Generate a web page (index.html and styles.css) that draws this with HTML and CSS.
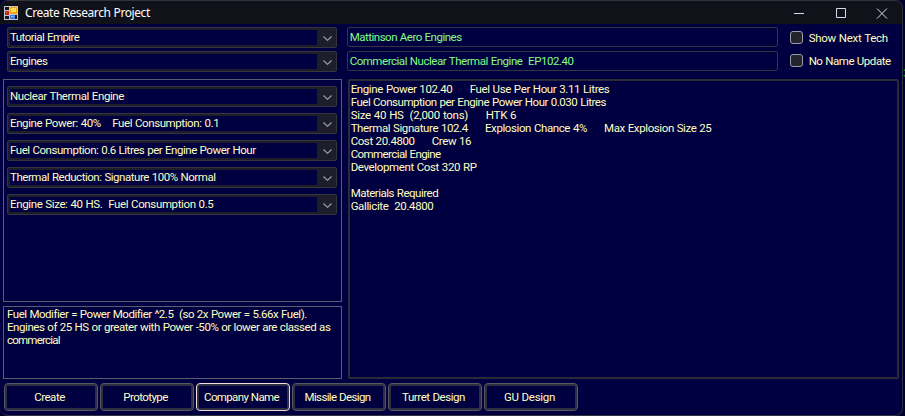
FILE: index.html
```html
<!DOCTYPE html>
<html lang="en">
<head>
<meta charset="utf-8">
<title>Create Research Project</title>
<link rel="stylesheet" href="styles.css">
</head>
<body>
<svg class="defs" width="0" height="0"><symbol id="chev" viewBox="0 0 9 5"><path d="M.5 .5 4.5 4.3 8.5 .5" fill="none" stroke="#a5a5ad" stroke-width="1.1"/></symbol></svg>
<div class="window">
  <header class="titlebar">
    <svg class="appicon" width="14" height="14" viewBox="0 0 14 14" shape-rendering="crispEdges">
      <path fill="#c4c6ca" d="M0 0h14v14H0z"/><path fill="#17181e" d="M1 1h4v3H1zM1 10h4v3H1zM6 1h7v12H6z"/>
      <path fill="#c8201c" d="M1 5h4v4H1z"/><path fill="#ef8a78" d="M2 6h1v1H2z"/>
      <path fill="#e8a70e" d="M6 1h7v7H6z"/><path fill="#ffd75a" d="M7 2h5v4H7z"/>
      <path fill="#c4c6ca" d="M6 8h7v1H6z"/><path fill="#3f7de0" d="M6 9h5v4H6z"/><path fill="#8fb8f5" d="M7 10h3v1H7z"/>
    </svg>
    <h1>Create Research Project</h1>
    <svg class="controls" width="94" height="12" viewBox="0 0 94 12" fill="none" stroke="#d5daf0">
      <path d="M0 6.5h10M42.5 1.5h9v9h-9zM83 1.5l10 10M93 1.5l-10 10"/>
    </svg>
  </header>
  <main>
    <section class="left">
      <div class="combo top"><span class="t55">Tutorial Empire</span><svg><use href="#chev"/></svg></div>
      <div class="combo top"><span class="t43">Engines</span><svg><use href="#chev"/></svg></div>
      <div class="group">
        <div class="combo"><span class="t40">Nuclear Thermal Engine</span><svg><use href="#chev"/></svg></div>
        <div class="combo"><span class="t40">Engine Power: 40%    Fuel Consumption: 0.1</span><svg><use href="#chev"/></svg></div>
        <div class="combo"><span class="t46">Fuel Consumption: 0.6 Litres per Engine Power Hour</span><svg><use href="#chev"/></svg></div>
        <div class="combo"><span class="t46">Thermal Reduction: Signature 100% Normal</span><svg><use href="#chev"/></svg></div>
        <div class="combo"><span class="t38">Engine Size: 40 HS.  Fuel Consumption 0.5</span><svg><use href="#chev"/></svg></div>
      </div>
      <div class="notes"><div class="t46">Fuel Modifier = Power Modifier ^2.5  (so 2x Power = 5.66x Fuel).</div><div class="t43">Engines of 25 HS or greater with Power -50% or lower are classed as</div><div class="t75">commercial</div></div>
    </section>
    <section class="right">
      <div class="head">
        <div class="fields">
          <div class="field"><span class="t49">Mattinson Aero Engines</span></div>
          <div class="field"><span class="t46">Commercial Nuclear Thermal Engine  EP102.40</span></div>
        </div>
        <div class="checks">
          <label><i></i><span class="t28">Show Next Tech</span></label>
          <label><i></i><span class="t46">No Name Update</span></label>
        </div>
      </div>
      <div class="output">
        <div><span class="t38">Engine Power 102.40      Fuel Use Per Hour 3.11 Litres</span></div>
        <div><span class="t46">Fuel Consumption per Engine Power Hour 0.030 Litres</span></div>
        <div><span class="t28">Size 40 HS  (2,000 tons)      HTK 6</span></div>
        <div><span class="t40">Thermal Signature 102.4      Explosion Chance 4%      Max Explosion Size 25</span></div>
        <div><span class="t40">Cost 20.4800      Crew 16</span></div>
        <div><span class="t58">Commercial Engine</span></div>
        <div><span class="t38">Development Cost 320 RP</span></div>
        <div>&nbsp;</div>
        <div><span class="t49">Materials Required</span></div>
        <div><span class="t38">Gallicite  20.4800</span></div>
      </div>
    </section>
  </main>
  <footer>
    <button class="t49">Create</button><button class="t58">Prototype</button><button class="t64 active">Company Name</button><button class="t64">Missile Design</button><button class="t43">Turret Design</button><button class="t28">GU Design</button>
  </footer>
</div>
<div class="behind"><span>3</span></div>
</body>
</html>
```
FILE: styles.css
```css
* { box-sizing: border-box; }
body { margin: 0; width: 905px; height: 416px; overflow: hidden; display: flex; background: #00002c;
  font: 11.5px/13px Roboto, "Liberation Sans", sans-serif; word-spacing: .4px; color: #ffffc0; }
span, .notes div, button { white-space: pre; }

/* tracking steps */
.t28 { letter-spacing: -.28px; }
.t38 { letter-spacing: -.37px; }
.t40 { letter-spacing: -.4px; }
.t43 { letter-spacing: -.44px; }
.t46 { letter-spacing: -.46px; }
.t49 { letter-spacing: -.49px; }
.t55 { letter-spacing: -.55px; }
.t58 { letter-spacing: -.58px; }
.t64 { letter-spacing: -.64px; }
.t75 { letter-spacing: -.78px; }

.defs { position: absolute; }
.window { width: 903px; height: 416px; flex: none; background: #000040; border: 1px solid #30323f; border-left: 0;
  border-radius: 8px; overflow: hidden; display: flex; flex-direction: column; }
.titlebar { height: 23px; flex: none; background: #101119; display: flex; align-items: center; padding: 0 14px 0 4px; }
h1 { margin: 1px 0 0 7px; font: 12px/16px "Noto Sans", sans-serif; letter-spacing: -.42px; color: #fff; flex: 1; }
main { display: flex; gap: 6px; padding: 3px 3px 0; height: 357px; flex: none; }
.left { width: 339px; }
.combo { height: 21px; background: #1e1e2a; border: 1px solid #34353f; border-radius: 2px; padding: 2px; display: flex;
  align-items: center; margin-bottom: 6px; }
.combo.top { margin: 0 5px 3px 4px; }
.combo span { width: 307px; height: 15px; line-height: 15px; background: #000040; }
.combo svg { width: 9px; height: 5px; margin: 1px 0 0 6px; }
.group { height: 223px; border: 1px solid #5a5c72; margin: 7px 0 4px; padding: 6px 4px 0 3px; }
.notes { height: 73px; border: 1px solid #5a5c72; padding: 1px 3px; }
.right { width: 552px; }
.head { display: flex; height: 52px; margin-left: -1px; }
.fields { width: 431px; }
.field { height: 20px; border: 1px solid #34353f; border-radius: 2px; margin-bottom: 4px; padding-left: 2px;
  line-height: 18px; color: #80ff80; }
.checks { margin-left: 12px; padding-top: 4px; }
label { display: flex; height: 13px; margin-bottom: 10px; gap: 6px; line-height: 14px; }
i { width: 13px; height: 13px; border: 1px solid #9c9ca6; border-radius: 3px; background: #23232e; }
.output { width: 551px; height: 300px; border: 2px solid #2a2b36; border-radius: 2px; padding: 2px 1px; }
footer { display: flex; gap: 2px; padding: 2px 4px; }
button { width: 94px; height: 28px; padding: 0 3px 0 0; border: 1px solid #565869; border-radius: 4px; background: #000040;
  box-shadow: inset 0 0 0 2px #2d2f3e; color: inherit; font: inherit; word-spacing: inherit; }
button.active { border-color: #f2dede; }
.behind { width: 2px; overflow: hidden; padding-top: 67px; color: #00a000; }
```
